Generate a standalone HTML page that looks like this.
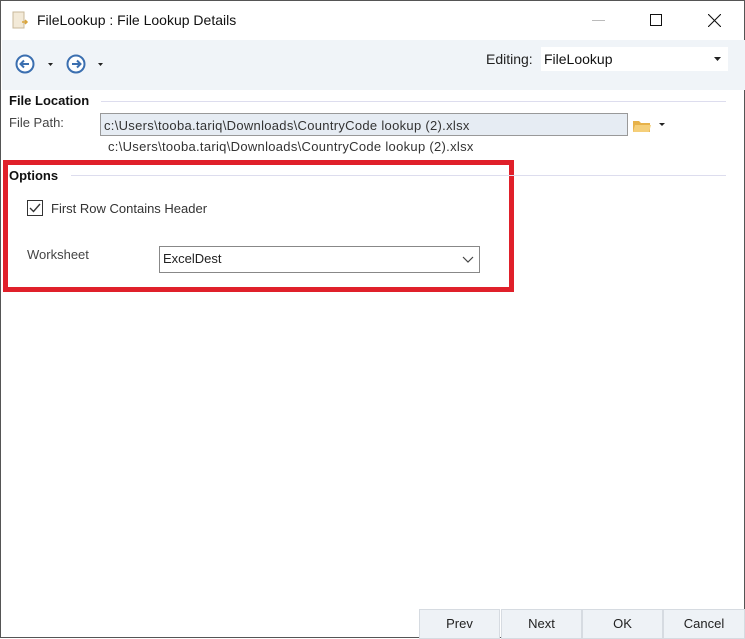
<!DOCTYPE html>
<html><head><style>
*{margin:0;padding:0;box-sizing:border-box}
body{width:745px;height:638px;background:#fff;font-family:"Liberation Sans",sans-serif;font-size:12px;color:#333;position:relative;overflow:hidden;border:1px solid #555}
.a{position:absolute}
.btn{position:absolute;top:608px;height:30px;background:#eef2f6;border:1px solid #d6dbe1;text-align:center;line-height:28px;font-size:13px;color:#222}
</style></head><body>
<svg class="a" style="left:10px;top:10px" width="18" height="20"><rect x="2" y="1" width="11" height="16" fill="#f3ead8" stroke="#c8b89a"/><path d="M11 11h5M14 9l2 2-2 2" stroke="#d9a43a" stroke-width="1.5" fill="none"/></svg>
<div class="a" style="left:36px;top:11px;font-size:14px;color:#111">FileLookup : File Lookup Details</div>
<div class="a" style="left:591px;top:19px;width:13px;height:1px;background:#bbb"></div>
<div class="a" style="left:649px;top:13px;width:12px;height:12px;border:1px solid #111"></div>
<svg class="a" style="left:707px;top:13px" width="13" height="13"><path d="M0 0L13 13M13 0L0 13" stroke="#111" stroke-width="1.1"/></svg>
<div class="a" style="left:1px;top:39px;width:743px;height:50px;background:#f0f4f8"></div>
<svg class="a" style="left:14px;top:53px" width="100" height="22"><circle cx="10" cy="10" r="8.5" fill="#fff" stroke="#3b6fb0" stroke-width="2"/><path d="M14 10H6M9 6.5L5.5 10 9 13.5" stroke="#3b6fb0" stroke-width="2" fill="none"/><path d="M33 9h5l-2.5 3z" fill="#222"/><circle cx="61" cy="10" r="8.5" fill="#fff" stroke="#3b6fb0" stroke-width="2"/><path d="M57 10h8M62 6.5L65.5 10 62 13.5" stroke="#3b6fb0" stroke-width="2" fill="none"/><path d="M83 9h5l-2.5 3z" fill="#222"/></svg>
<div class="a" style="left:485px;top:50px;font-size:14px;color:#222">Editing:</div>
<div class="a" style="left:540px;top:46px;width:187px;height:24px;background:#fff"></div>
<div class="a" style="left:543px;top:50px;font-size:14px;color:#111">FileLookup</div>
<svg class="a" style="left:713px;top:56px" width="8" height="5"><path d="M0 0h7l-3.5 4z" fill="#222"/></svg>
<div class="a" style="left:8px;top:92px;font-size:13px;font-weight:bold;color:#111">File Location</div>
<div class="a" style="left:100px;top:100px;width:625px;height:1px;background:#dde"></div>
<div class="a" style="left:8px;top:114px;font-size:13px;color:#444">File Path:</div>
<div class="a" style="left:99px;top:112px;width:528px;height:23px;background:#e6ecf3;border:1px solid #999"></div>
<div class="a" style="left:103px;top:117px;font-size:13px;color:#333;letter-spacing:0.3px">c:\Users\tooba.tariq\Downloads\CountryCode lookup (2).xlsx</div>
<svg class="a" style="left:630px;top:115px" width="36" height="18"><path d="M2 5h6l2 2h9v9H2z" fill="#e7b24a"/><path d="M4 9h16l-2 7H2z" fill="#f5cf7a"/><path d="M28 7h6l-3 3z" fill="#222"/></svg>
<div class="a" style="left:107px;top:138px;font-size:13px;color:#333;letter-spacing:0.3px">c:\Users\tooba.tariq\Downloads\CountryCode lookup (2).xlsx</div>
<div class="a" style="left:2px;top:159px;width:511px;height:132px;border:5px solid #e0202a"></div>
<div class="a" style="left:8px;top:167px;font-size:13px;font-weight:bold;color:#111">Options</div>
<div class="a" style="left:70px;top:174px;width:655px;height:1px;background:#dde"></div>
<div class="a" style="left:26px;top:199px;width:16px;height:16px;border:1px solid #333;background:#fff"></div>
<svg class="a" style="left:27px;top:200px" width="14" height="14"><path d="M2 7l3.5 3.5L12 3" stroke="#333" stroke-width="1.4" fill="none"/></svg>
<div class="a" style="left:50px;top:200px;font-size:13px;color:#333">First Row Contains Header</div>
<div class="a" style="left:26px;top:246px;font-size:13px;color:#444">Worksheet</div>
<div class="a" style="left:158px;top:245px;width:321px;height:27px;border:1px solid #888;background:#fff"></div>
<div class="a" style="left:162px;top:250px;font-size:13px;color:#222">ExcelDest</div>
<svg class="a" style="left:461px;top:255px" width="12" height="8"><path d="M1 1l5 5 5-5" stroke="#444" stroke-width="1.2" fill="none"/></svg>
<div class="btn" style="left:418px;width:81px">Prev</div>
<div class="btn" style="left:500px;width:81px">Next</div>
<div class="btn" style="left:581px;width:81px">OK</div>
<div class="btn" style="left:662px;width:82px">Cancel</div>
</body></html>
